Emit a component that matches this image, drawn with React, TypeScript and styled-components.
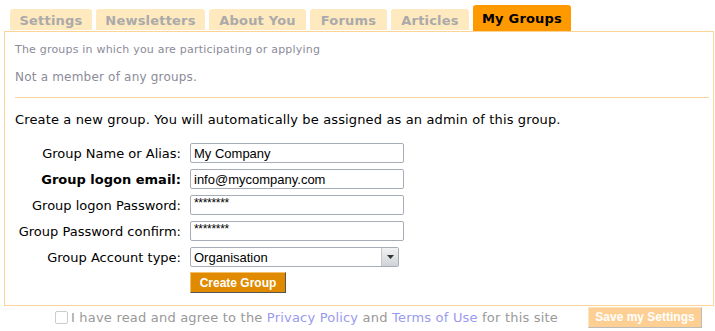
import styled, { createGlobalStyle } from 'styled-components';

const Global = createGlobalStyle`
  body {
    margin: 0;
    background: #fff;
    font-family: "DejaVu Sans", Verdana, sans-serif;
  }
`;

const Page = styled.div`
  width: 715px;
  padding-top: 5px;
`;

const Tabs = styled.div`
  display: flex;
  align-items: flex-end;
  gap: 4px;
  padding-left: 10px;
  height: 26px;
`;

const Tab = styled.div<{ $active?: boolean; $w: number }>`
  width: ${p => p.$w}px;
  height: ${p => (p.$active ? '26px' : '21px')};
  margin-bottom: ${p => (p.$active ? '0' : '1px')};
  padding-top: ${p => (p.$active ? '0' : '1px')};
  box-sizing: border-box;
  display: flex;
  align-items: center;
  justify-content: center;
  border-radius: 3px 3px 0 0;
  background: ${p => (p.$active ? '#ff9900' : '#ffe9bf')};
  color: ${p => (p.$active ? '#000' : '#aaa')};
  font-size: 13px;
  font-weight: bold;
  letter-spacing: 0.2px;
  white-space: nowrap;
`;

const Panel = styled.div`
  margin-left: 4px;
  width: 710px;
  height: 275px;
  border: 1px solid #fdd496;
  padding: 0 4px 0 10px;
  box-sizing: border-box;
  letter-spacing: 0.2px;
`;

const Hint = styled.div`
  font-size: 11px;
  color: #8b8b99;
  margin-top: 11px;
`;

const Muted = styled.div`
  font-size: 12px;
  color: #8b8b99;
  margin-top: 14px;
`;

const Rule = styled.hr`
  border: none;
  border-top: 1px solid #fdd496;
  margin: 13px 0 0 0;
`;

const Intro = styled.div`
  font-size: 13px;
  color: #000;
  margin-top: 14px;
  letter-spacing: 0.14px;
`;

const Form = styled.div`
  display: grid;
  grid-template-columns: 166px auto;
  column-gap: 9px;
  row-gap: 6px;
  margin-top: 16px;
  align-items: center;
  letter-spacing: 0;
`;

const Label = styled.label<{ $strong?: boolean }>`
  text-align: right;
  font-size: 13px;
  color: #000;
  font-weight: ${p => (p.$strong ? 'bold' : 'normal')};
  white-space: nowrap;
`;

const Field = styled.div`
  width: 214px;
  height: 20px;
  box-sizing: border-box;
  border: 1px solid #a6adb7;
  border-radius: 2px;
  font-family: "Liberation Sans", Arial, sans-serif;
  font-size: 13px;
  padding-left: 3px;
  display: flex;
  align-items: center;
  color: #000;
`;

const Stars = styled.span`
  font-size: 12px;
  margin-top: -4px;
  letter-spacing: -0.3px;
`;

const Select = styled.div`
  width: 209px;
  height: 20px;
  box-sizing: border-box;
  border: 1px solid #a6adb7;
  border-radius: 2px;
  display: flex;
  font-family: "Liberation Sans", Arial, sans-serif;
  font-size: 13px;
`;

const SelectValue = styled.div`
  flex: 1;
  padding-left: 3px;
  display: flex;
  align-items: center;
`;

const SelectArrow = styled.div`
  width: 16px;
  display: flex;
  align-items: center;
  justify-content: center;
  background: linear-gradient(#f2f2f2, #cfd3d8);
  border-left: 1px solid #c4c8cd;
`;

const CreateButton = styled.button`
  width: 96px;
  height: 21px;
  margin-top: -1px;
  padding: 0;
  background: #e08a00;
  color: #fff;
  font-family: "Liberation Sans", Arial, sans-serif;
  font-weight: bold;
  font-size: 12px;
  border: 1px solid;
  border-color: #f4c16e #555 #555 #f4c16e;
`;

const Footer = styled.div`
  display: flex;
  align-items: center;
  padding-left: 55px;
  height: 22px;
  font-size: 13px;
  color: #999;
  letter-spacing: 0.2px;
`;

const Check = styled.span`
  width: 11px;
  height: 11px;
  border: 1px solid #ccc;
  border-radius: 2px;
  margin-right: 3px;
`;

const Link = styled.a`
  color: #9a9af0;
  text-decoration: none;
`;

const SaveButton = styled.button`
  margin-left: auto;
  margin-right: 13px;
  width: 114px;
  height: 21px;
  padding: 0;
  background: #fdcf93;
  color: #fff;
  font-family: "Liberation Sans", Arial, sans-serif;
  font-weight: bold;
  font-size: 12px;
  letter-spacing: 0;
  border: 1px solid;
  border-color: #fde3bf #bbb #bbb #fde3bf;
`;

const tabs: [string, number][] = [
  ['Settings', 82],
  ['Newsletters', 109],
  ['About You', 97],
  ['Forums', 77],
  ['Articles', 78],
  ['My Groups', 98],
];

export default function App() {
  return (
    <Page>
      <Global />
      <Tabs>
        {tabs.map(([t, w]) => (
          <Tab key={t} $w={w} $active={t === 'My Groups'}>{t}</Tab>
        ))}
      </Tabs>
      <Panel>
        <Hint>The groups in which you are participating or applying</Hint>
        <Muted>Not a member of any groups.</Muted>
        <Rule />
        <Intro>Create a new group. You will automatically be assigned as an admin of this group.</Intro>
        <Form>
          <Label>Group Name or Alias:</Label>
          <Field>My Company</Field>
          <Label $strong>Group logon email:</Label>
          <Field>info@mycompany.com</Field>
          <Label>Group logon Password:</Label>
          <Field><Stars>********</Stars></Field>
          <Label>Group Password confirm:</Label>
          <Field><Stars>********</Stars></Field>
          <Label>Group Account type:</Label>
          <Select>
            <SelectValue>Organisation</SelectValue>
            <SelectArrow>
              <svg width="7" height="4" viewBox="0 0 7 4"><path d="M0 0h7L3.5 4z" fill="#333" /></svg>
            </SelectArrow>
          </Select>
          <span />
          <CreateButton>Create Group</CreateButton>
        </Form>
      </Panel>
      <Footer>
        <Check />
        I have read and agree to the&nbsp;<Link>Privacy Policy</Link>&nbsp;and&nbsp;<Link>Terms of Use</Link>&nbsp;for this site
        <SaveButton>Save my Settings</SaveButton>
      </Footer>
    </Page>
  );
}
